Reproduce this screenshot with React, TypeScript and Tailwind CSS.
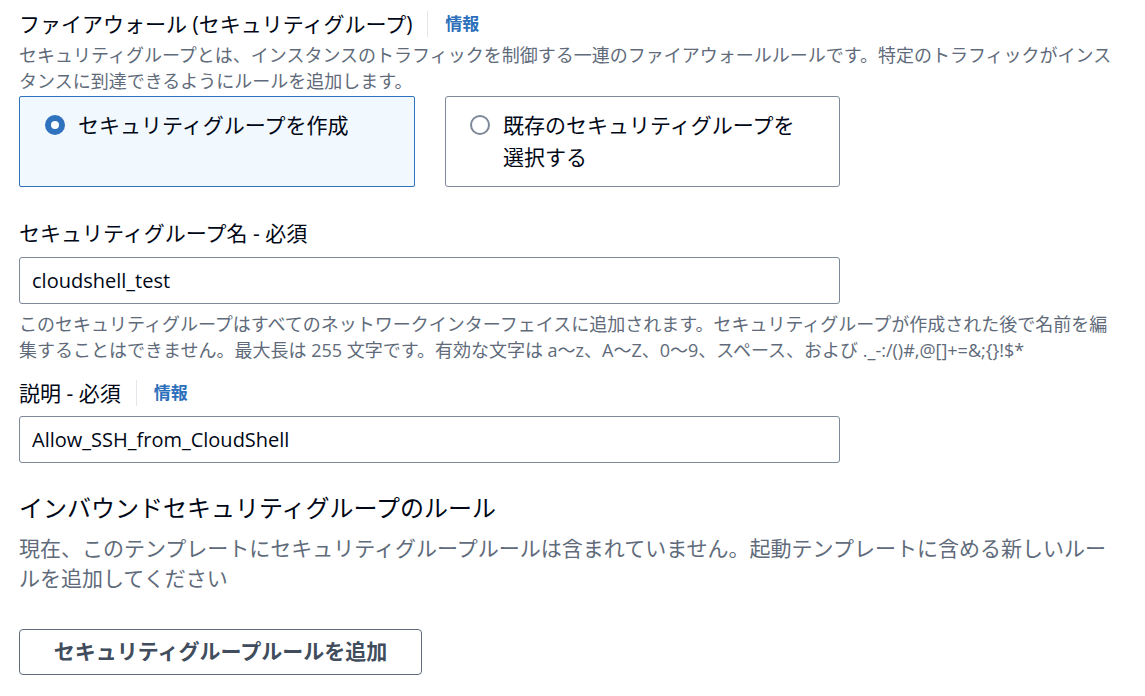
import React from "react";

const jp = "font-['Open_Sans','Noto_Sans_CJK_JP',sans-serif]";

const helpText =
    "このセキュリティグループはすべてのネットワークインターフェイスに追加されます。セキュリティグループが作成された後で名前を編集することはできません。最大長は 255 文字です。有効な文字は a～z、A～Z、0～9、スペース、および ._-:/()#,@[]+=&;{}!$*";

function Radio({ checked }: { checked: boolean }) {
    if (checked) {
        return (
            <span className="flex h-[20px] w-[20px] shrink-0 items-center justify-center rounded-full bg-[#2f72bd]">
                <span className="h-[8px] w-[8px] rounded-full bg-white" />
            </span>
        );
    }
    return <span className="h-[20px] w-[20px] shrink-0 rounded-full border-2 border-[#7d8998] bg-white" />;
}

function InfoLink() {
    return (
        <>
            <span className="ml-[15px] h-[26px] w-px bg-[#e3e6ea]" />
            <a className="ml-[17px] text-[17px] font-bold leading-[26px] text-[#2c6fbb]">情報</a>
        </>
    );
}

export default function App() {
    return (
        <div className={`h-[696px] w-[1145px] overflow-hidden bg-white pl-[19px] ${jp}`}>
            <div className="w-[1104px]">
                {/* header */}
                <div className="flex items-center pt-[11px]">
                    <h3 className="text-[21px] font-normal leading-[26px] text-[#000716]">ファイアウォール (セキュリティグループ)</h3>
                    <InfoLink />
                </div>
                <p className="mt-[5px] text-[18px] leading-[26px] text-[#5f6b7a]">
                    セキュリティグループとは、インスタンスのトラフィックを制御する一連のファイアウォールルールです。特定のトラフィックがインスタンスに到達できるようにルールを追加します。
                </p>

                {/* tiles */}
                <div className="mt-[2px] flex gap-[30px]">
                    <div className="flex h-[91px] w-[396px] items-start gap-[13px] rounded-[2px] border border-[#2f72bd] bg-[#f1f8fe] pl-[25px] pt-[12px]">
                        <div className="flex h-[32px] items-center">
                            <Radio checked />
                        </div>
                        <span className="text-[21px] leading-[32px] text-[#000716]">セキュリティグループを作成</span>
                    </div>
                    <div className="flex h-[91px] w-[395px] items-start gap-[13px] rounded-[3px] border border-[#7d8998] bg-white pl-[24px] pt-[12px]">
                        <div className="flex h-[32px] items-center">
                            <Radio checked={false} />
                        </div>
                        <span className="w-[300px] text-[21px] leading-[32px] text-[#000716]">既存のセキュリティグループを選択する</span>
                    </div>
                </div>

                {/* name */}
                <label className="mt-[33px] block text-[21px] leading-[26px] text-[#000716]">セキュリティグループ名 - 必須</label>
                <div className="mt-[11px] flex h-[47px] w-[821px] items-center rounded-[3px] border border-[#7d8998] pl-[12px] text-[20px] text-[#000716]">
                    cloudshell_test
                </div>
                <p className="mt-[7px] text-[18px] leading-[26px] text-[#5f6b7a]">{helpText}</p>

                {/* description */}
                <div className="mt-[17px] flex items-center">
                    <label className="text-[21px] leading-[26px] text-[#000716]">説明 - 必須</label>
                    <InfoLink />
                </div>
                <div className="mt-[10px] flex h-[47px] w-[821px] items-center rounded-[3px] border border-[#7d8998] pl-[12px] text-[20px] text-[#000716]">
                    Allow_SSH_from_CloudShell
                </div>

                {/* inbound rules */}
                <h2 className="mt-[30px] text-[24px] font-normal leading-[30px] text-[#000716]">インバウンドセキュリティグループのルール</h2>
                <p className="mt-[10px] text-[21px] leading-[30px] text-[#5f6b7a]">
                    現在、このテンプレートにセキュリティグループルールは含まれていません。起動テンプレートに含める新しいルールを追加してください
                </p>
                <button className="mt-[36px] flex h-[46px] w-[403px] items-center justify-center rounded-[4px] border border-[#5f6b7a] bg-white text-[21px] font-bold text-[#414d5c]">
                    セキュリティグループルールを追加
                </button>
            </div>
        </div>
    );
}
